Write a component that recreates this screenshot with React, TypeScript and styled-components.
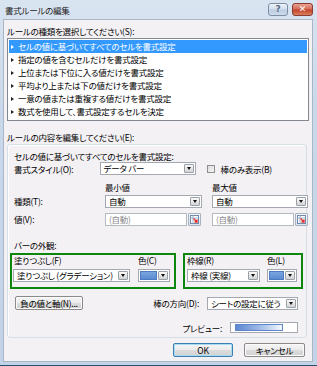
import React from 'react';
import styled, { createGlobalStyle } from 'styled-components';

const Global = createGlobalStyle`
  html, body { margin: 0; padding: 0; background: #ffffff; }
  body {
    font-family: "Noto Sans CJK JP", "Noto Sans", sans-serif;
    font-size: 8.5px;
    letter-spacing: -0.25px;
    font-feature-settings: "palt";
    color: #000;
  }
  * { box-sizing: border-box; }
`;

const Window = styled.div`
  width: 317px;
  height: 366px;
  display: flex;
  flex-direction: column;
  padding: 0 4px 3px 3px;
  background: linear-gradient(180deg, #d9e4f1 0%, #c9d8ea 30%, #c3d3e7 100%);
  border-bottom: 1px solid #27506e;
`;

const TitleBar = styled.div`
  height: 19px;
  display: flex;
  align-items: center;
  padding: 0 0 0 2px;
`;

const Title = styled.span`
  flex: 1;
  line-height: 12px;
  color: #1b1b1b;
`;

const CaptionButton = styled.div<{ $close?: boolean }>`
  width: ${p => (p.$close ? '21px' : '20px')};
  height: 13px;
  margin-left: ${p => (p.$close ? '4px' : '0')};
  border: 1px solid ${p => (p.$close ? '#8a3b33' : '#7d8fa6')};
  border-radius: 3px;
  background: ${p =>
    p.$close
      ? 'linear-gradient(180deg, #e8a493 0%, #d46c56 45%, #c2432a 55%, #d9805f 100%)'
      : 'linear-gradient(180deg, #eef3f9 0%, #d3dfed 45%, #bccde2 55%, #cfdcec 100%)'};
  display: flex;
  align-items: center;
  justify-content: center;
  color: ${p => (p.$close ? '#ffffff' : '#5a6a80')};
  font-family: "DejaVu Sans", sans-serif;
  font-size: 9px;
  letter-spacing: 0;
  font-weight: bold;
  line-height: 1;
`;

const Body = styled.div`
  flex: 1;
  display: flex;
  flex-direction: column;
  background: #f4f1f5;
  border: 1px solid #a9b6c6;
  padding: 5px 3px 0 3px;
`;

const Label = styled.div<{ $mt?: number }>`
  line-height: 12px;
  height: 12px;
  margin-top: ${p => p.$mt ?? 0}px;
  white-space: nowrap;
`;

const ListBox = styled.div`
  margin-top: 1px;
  height: 83px;
  background: #ffffff;
  border: 1px solid #828790;
  padding: 1px 1px 0 1px;
`;

const ListItem = styled.div<{ $selected?: boolean }>`
  height: 13px;
  line-height: 13px;
  display: flex;
  align-items: center;
  padding-left: 2px;
  background: ${p => (p.$selected ? '#3399ff' : 'transparent')};
  color: ${p => (p.$selected ? '#ffffff' : '#000000')};
  white-space: nowrap;
`;

const Bullet = styled.span<{ $selected?: boolean }>`
  width: 0;
  height: 0;
  margin-right: 4px;
  border-left: 3px solid ${p => (p.$selected ? '#ffffff' : '#222222')};
  border-top: 2px solid transparent;
  border-bottom: 2px solid transparent;
`;

const Group = styled.div`
  margin: 1px 2px 0 0;
  height: 194px;
  border: 1px solid #d5dfe5;
  border-radius: 3px;
  box-shadow: inset 1px 1px 0 #ffffff;
  padding: 6px 8px 4px 6px;
  display: flex;
  flex-direction: column;
`;

const TextLine = styled.div<{ $mt?: number }>`
  height: 11px;
  line-height: 11px;
  margin-top: ${p => p.$mt ?? 0}px;
  white-space: nowrap;
`;

const Row = styled.div<{ $mt?: number; $h?: number }>`
  display: flex;
  align-items: center;
  height: ${p => p.$h ?? 13}px;
  margin-top: ${p => p.$mt ?? 0}px;
  white-space: nowrap;
`;

const Grid = styled.div<{ $mt?: number; $h?: number }>`
  display: grid;
  grid-template-columns: 81px 97px 96px;
  column-gap: 10px;
  align-items: center;
  height: ${p => p.$h ?? 13}px;
  margin-top: ${p => p.$mt ?? 0}px;
  white-space: nowrap;
  line-height: 11px;
`;

const Combo = styled.div<{ $w: number; $ml?: number }>`
  width: ${p => p.$w}px;
  height: 13px;
  margin-left: ${p => p.$ml ?? 0}px;
  background: #ffffff;
  border: 1px solid #a4a8b0;
  display: flex;
  align-items: center;
  flex-shrink: 0;
`;

const ComboText = styled.span`
  flex: 1;
  padding-left: 3px;
  line-height: 11px;
  overflow: hidden;
  white-space: nowrap;
`;

const DropButton = styled.span`
  width: 10px;
  height: 9px;
  margin-right: 1px;
  flex-shrink: 0;
  border: 1px solid #9aa0a8;
  border-radius: 1px;
  background: linear-gradient(180deg, #fafafa 0%, #e6e6e6 50%, #d4d4d4 100%);
  display: flex;
  align-items: center;
  justify-content: center;
  &::after {
    content: '';
    width: 0;
    height: 0;
    border-top: 3px solid #111111;
    border-left: 2.5px solid transparent;
    border-right: 2.5px solid transparent;
  }
`;

const CheckBox = styled.span`
  width: 8px;
  height: 8px;
  margin-left: 11px;
  margin-right: 6px;
  border: 1px solid #8f8f8f;
  background: linear-gradient(135deg, #dcdcdc 0%, #f6f6f6 100%);
  flex-shrink: 0;
`;

const ValueCell = styled.div`
  display: flex;
  align-items: center;
  gap: 1px;
`;

const TextBox = styled.div<{ $w: number }>`
  width: ${p => p.$w}px;
  height: 13px;
  background: #ffffff;
  border: 1px solid #b5b9c0;
  color: #8a8a8a;
  padding-left: 3px;
  line-height: 11px;
`;

const PickerButton = styled.span`
  width: 13px;
  height: 13px;
  display: flex;
  align-items: center;
  justify-content: center;
  border: 1px solid #a9b3c0;
  border-radius: 1px;
  background: linear-gradient(180deg, #f4f7fb 0%, #dde5ef 100%);
`;

const GreenRow = styled.div`
  display: flex;
  gap: 7px;
  margin: 2px -5px 0 -4px;
  height: 36px;
`;

const GreenBox = styled.div<{ $w: number }>`
  width: ${p => p.$w}px;
  height: 36px;
  border: 2px solid #0c860c;
  padding: 0 2px 0 1px;
  display: grid;
  grid-template-rows: 11px 13px;
  row-gap: 3px;
  align-content: start;
`;

const GreenGrid = styled.div<{ $cols: string }>`
  display: grid;
  grid-template-columns: ${p => p.$cols};
  column-gap: 8px;
  align-items: center;
  line-height: 11px;
  white-space: nowrap;
`;

const GreenLabel = styled.span<{ $pl?: number }>`
  padding-left: ${p => p.$pl ?? 0}px;
`;

const ColorCombo = styled.div`
  height: 13px;
  border: 1px solid #a4a8b0;
  background: #ffffff;
  display: flex;
  align-items: center;
  padding-left: 1px;
`;

const Swatch = styled.span`
  flex: 1;
  height: 9px;
  margin-right: 1px;
  background: linear-gradient(180deg, #7aa4df 0%, #5b8bd3 100%);
  border: 1px solid #4d79bd;
`;

const PushButton = styled.div<{ $w: number; $default?: boolean; $ml?: number }>`
  width: ${p => p.$w}px;
  height: 14px;
  margin-left: ${p => p.$ml ?? 0}px;
  border: 1px solid ${p => (p.$default ? '#3c7fb1' : '#8a8a8a')};
  border-radius: 2px;
  background: linear-gradient(180deg, #f4f4f4 0%, #ececec 48%, #dcdcdc 52%, #d2d2d2 100%);
  box-shadow: ${p => (p.$default ? 'inset 0 0 0 1px #a8dcf5' : 'inset 0 0 0 1px #fbfbfb')};
  display: flex;
  align-items: center;
  justify-content: center;
  line-height: 11px;
  white-space: nowrap;
  flex-shrink: 0;
`;

const Spacer = styled.div`
  flex: 1;
`;

const PreviewBox = styled.div`
  width: 68px;
  height: 11px;
  margin-left: 8px;
  background: #ffffff;
  border: 1px solid #a4a8b0;
  padding: 1px 14px 1px 4px;
  display: flex;
`;

const PreviewBar = styled.div`
  flex: 1;
  border: 1px solid #5c85cc;
  background: linear-gradient(90deg, #5d88d1 0%, #9db8e6 50%, #f4f7fd 100%);
`;

const Footer = styled.div`
  display: flex;
  justify-content: flex-end;
  gap: 11px;
  margin-top: 5px;
  padding-right: 4px;
`;

const items = [
  'セルの値に基づいてすべてのセルを書式設定',
  '指定の値を含むセルだけを書式設定',
  '上位または下位に入る値だけを書式設定',
  '平均より上または下の値だけを書式設定',
  '一意の値または重複する値だけを書式設定',
  '数式を使用して、書式設定するセルを決定',
];

const Picker = () => (
  <PickerButton>
    <svg width="9" height="9" viewBox="0 0 9 9">
      <rect x="0.5" y="0.5" width="8" height="8" fill="#ffffff" stroke="#6f87a8" />
      <line x1="0.5" y1="3" x2="8.5" y2="3" stroke="#9fb2cc" />
      <line x1="3" y1="0.5" x2="3" y2="8.5" stroke="#9fb2cc" />
      <path d="M3.5 3.5 L7 7 M4.5 7 L7 7 L7 4.5" stroke="#e0302a" strokeWidth="1.4" fill="none" />
    </svg>
  </PickerButton>
);

export default function App() {
  return (
    <>
      <Global />
      <Window>
        <TitleBar>
          <Title>書式ルールの編集</Title>
          <CaptionButton>?</CaptionButton>
          <CaptionButton $close>✕</CaptionButton>
        </TitleBar>
        <Body>
          <Label>ルールの種類を選択してください(S):</Label>
          <ListBox>
            {items.map((t, i) => (
              <ListItem key={t} $selected={i === 0}>
                <Bullet $selected={i === 0} />
                {t}
              </ListItem>
            ))}
          </ListBox>
          <Label $mt={10}>ルールの内容を編集してください(E):</Label>
          <Group>
            <TextLine>セルの値に基づいてすべてのセルを書式設定:</TextLine>
            <Row>
              <span>書式スタイル(O):</span>
              <Spacer />
              <Combo $w={96}>
                <ComboText>データ バー</ComboText>
                <DropButton />
              </Combo>
              <CheckBox />
              <span>棒のみ表示(B)</span>
              <Spacer />
            </Row>
            <Grid $mt={7} $h={11}>
              <span />
              <span>最小値</span>
              <span>最大値</span>
            </Grid>
            <Grid $mt={2}>
              <span>種類(T):</span>
              <Combo $w={97}>
                <ComboText>自動</ComboText>
                <DropButton />
              </Combo>
              <Combo $w={96}>
                <ComboText>自動</ComboText>
                <DropButton />
              </Combo>
            </Grid>
            <Grid $mt={5}>
              <span>値(V):</span>
              <ValueCell>
                <TextBox $w={82}>(自動)</TextBox>
                <Picker />
              </ValueCell>
              <ValueCell>
                <TextBox $w={82}>(自動)</TextBox>
                <Picker />
              </ValueCell>
            </Grid>
            <TextLine $mt={14}>バーの外観:</TextLine>
            <GreenRow>
              <GreenBox $w={166}>
                <GreenGrid $cols="117px 32px">
                  <GreenLabel $pl={1}>塗りつぶし(F)</GreenLabel>
                  <span>色(C)</span>
                </GreenGrid>
                <GreenGrid $cols="117px 32px">
                  <Combo $w={117}>
                    <ComboText>塗りつぶし (グラデーション)</ComboText>
                    <DropButton />
                  </Combo>
                  <ColorCombo>
                    <Swatch />
                    <DropButton />
                  </ColorCombo>
                </GreenGrid>
              </GreenBox>
              <GreenBox $w={120}>
                <GreenGrid $cols="73px 30px">
                  <GreenLabel $pl={1}>枠線(R)</GreenLabel>
                  <span>色(L)</span>
                </GreenGrid>
                <GreenGrid $cols="73px 30px">
                  <Combo $w={73} $ml={1}>
                    <ComboText>枠線 (実線)</ComboText>
                    <DropButton />
                  </Combo>
                  <ColorCombo>
                    <Swatch />
                    <DropButton />
                  </ColorCombo>
                </GreenGrid>
              </GreenBox>
            </GreenRow>
            <Row $mt={7} $h={14}>
              <PushButton $w={68} $ml={1}>負の値と軸(N)...</PushButton>
              <Spacer />
              <span>棒の方向(D):</span>
              <Combo $w={91} $ml={8}>
                <ComboText>シートの設定に従う</ComboText>
                <DropButton />
              </Combo>
            </Row>
            <Row $mt={12} $h={11}>
              <Spacer />
              <span>プレビュー:</span>
              <PreviewBox>
                <PreviewBar />
              </PreviewBox>
            </Row>
          </Group>
          <Footer>
            <PushButton $w={60} $default>OK</PushButton>
            <PushButton $w={61}>キャンセル</PushButton>
          </Footer>
        </Body>
      </Window>
    </>
  );
}
